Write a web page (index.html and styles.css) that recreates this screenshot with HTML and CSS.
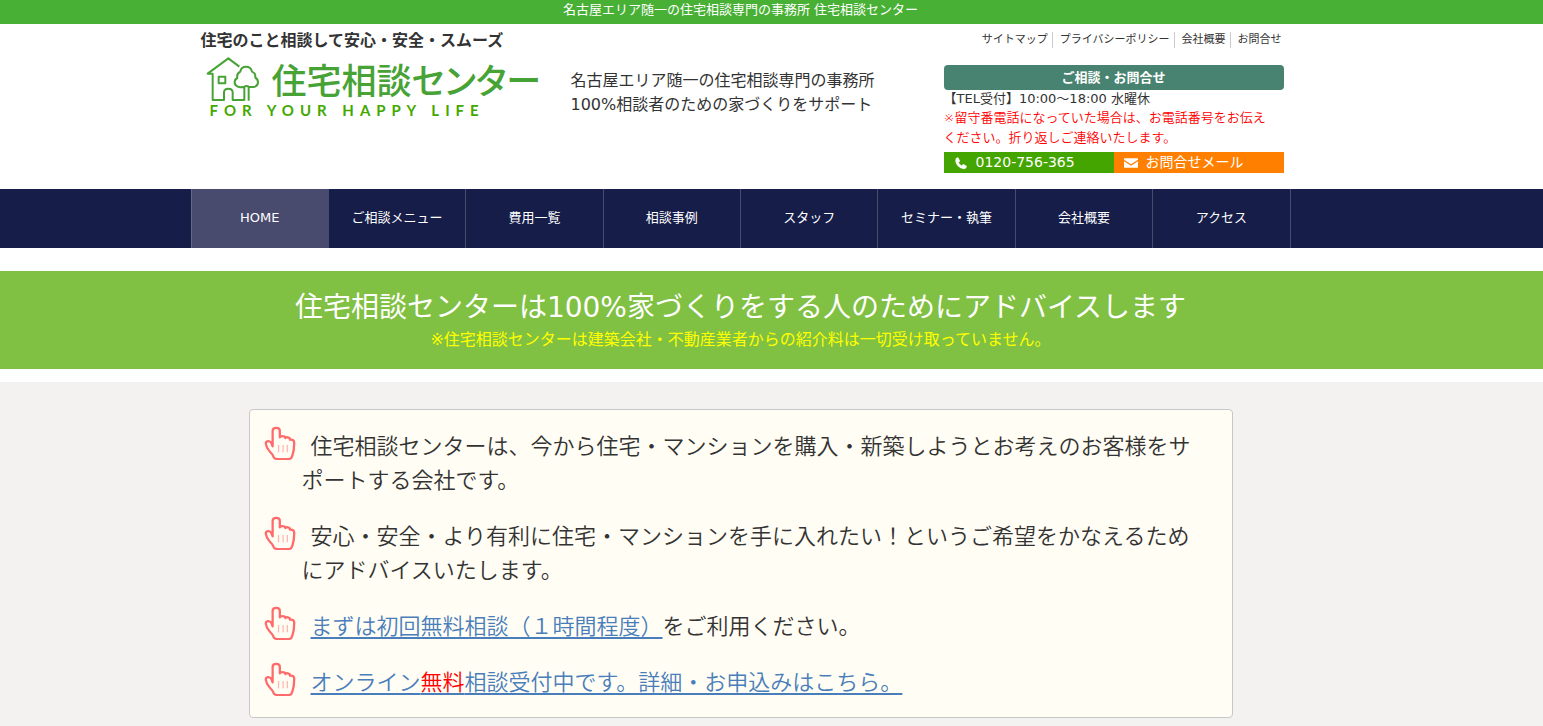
FILE: index.html
```html
<!DOCTYPE html>
<html lang="ja">
<head>
<meta charset="utf-8">
<title>住宅相談センター</title>
<link rel="stylesheet" href="styles.css">
</head>
<body>
<svg class="defs" aria-hidden="true">
  <symbol id="hand" viewBox="71 78 97 104">
    <path class="hand-line" d="M97 138V93q0-9 11-9t11 9v20q2-5 9-4 7 0 8 6 2-4 8-2 6 1 6 7 13-2 13 10 0 22-5 36l-3 8q-2 5-10 5h-33q-7 0-11-4-4-11-13-19-10-10-12-24 0-8 8-8 6 0 9 6l4 10"/>
    <path class="hand-fold" d="M115 136v22M129 136v22M142 136v22"/>
  </symbol>
</svg>
<p class="topbar">名古屋エリア随一の住宅相談専門の事務所 住宅相談センター</p>
<header class="wrap">
  <div class="header">
    <div class="brand">
      <h1 class="tagline">住宅のこと相談して安心・安全・スムーズ</h1>
      <a class="logo" href="#">
        <span class="logo-row">
          <svg class="house" viewBox="18 18 162 138" aria-hidden="true">
            <path d="M118 50L85 25 23 71h15v79h34v-23q0-11 13-11t13 11v23h35M56 80h20v20H56zM133 152v-42q-13 3-20 0-9-4-9-13 0-9 8-13-3-13 9-19 2-15 17-15t18 15q11 4 10 18 8 5 8 14 0 10-9 13-9 2-19 0v42M133 110q7-4 13 0"/>
          </svg>
          <span class="logo-name">住宅相談センター</span>
        </span>
        <span class="logo-sub">FOR YOUR HAPPY LIFE</span>
      </a>
    </div>
    <p class="lead">名古屋エリア随一の住宅相談専門の事務所<br>100%相談者のための家づくりをサポート</p>
    <div class="contact">
      <ul class="links">
        <li><a href="#">サイトマップ</a></li>
        <li><a href="#">プライバシーポリシー</a></li>
        <li><a href="#">会社概要</a></li>
        <li><a href="#">お問合せ</a></li>
      </ul>
      <h2 class="contact-title">ご相談・お問合せ</h2>
      <p class="hours">【TEL受付】10:00～18:00 水曜休</p>
      <p class="notice">※留守番電話になっていた場合は、お電話番号をお伝えください。折り返しご連絡いたします。</p>
      <div class="actions">
        <a class="tel" href="#"><svg class="icon" viewBox="0 0 16 16" aria-hidden="true"><path d="M4.600 1.500L7 5.600 5.300 7.400Q6.500 9.800 8.800 10.900L10.600 9.100 14.600 11.500Q14.500 15 11.300 15 7.500 15 4.200 11.500 1.300 8.300 1.500 4.800 1.600 1.800 4.600 1.500z"/></svg>0120-756-365</a>
        <a class="mail" href="#"><svg class="icon" viewBox="0 0 16 16" aria-hidden="true"><path d="M1 2.500h14q1 0 1 1v.8L8 9.500 0 4.300v-.8q0-1 1-1zM0 6l8 5.200L16 6v6.500q0 1-1 1H1q-1 0-1-1z"/></svg>お問合せメール</a>
      </div>
    </div>
  </div>
</header>
<nav class="nav wrap">
  <ul class="menu">
    <li><a class="current" href="#">HOME</a></li>
    <li><a href="#">ご相談メニュー</a></li>
    <li><a href="#">費用一覧</a></li>
    <li><a href="#">相談事例</a></li>
    <li><a href="#">スタッフ</a></li>
    <li><a href="#">セミナー・執筆</a></li>
    <li><a href="#">会社概要</a></li>
    <li><a href="#">アクセス</a></li>
  </ul>
</nav>
<section class="band">
  <h2>住宅相談センターは100%家づくりをする人のためにアドバイスします</h2>
  <p>※住宅相談センターは建築会社・不動産業者からの紹介料は一切受け取っていません。</p>
</section>
<main class="main wrap">
  <ul class="points">
    <li><svg class="hand" aria-hidden="true"><use href="#hand"/></svg><p>住宅相談センターは、今から住宅・マンションを購入・新築しようとお考えのお客様をサポートする会社です。</p></li>
    <li><svg class="hand" aria-hidden="true"><use href="#hand"/></svg><p>安心・安全・より有利に住宅・マンションを手に入れたい！というご希望をかなえるためにアドバイスいたします。</p></li>
    <li><svg class="hand" aria-hidden="true"><use href="#hand"/></svg><p><a href="#">まずは初回無料相談（１時間程度）</a>をご利用ください。</p></li>
    <li><svg class="hand" aria-hidden="true"><use href="#hand"/></svg><p><a href="#">オンライン<em>無料</em>相談受付中です。詳細・お申込みはこちら。</a></p></li>
  </ul>
</main>
</body>
</html>
```

FILE: styles.css
```css
* { box-sizing: border-box; margin: 0; padding: 0; }
body {
  font-family: "DejaVu Sans", "Noto Sans CJK JP", sans-serif;
  font-size: 13px;
  line-height: 20px;
  color: #333;
  background: #fff;
}
ul { list-style: none; }
a { color: inherit; text-decoration: none; }
.defs { position: absolute; width: 0; height: 0; }

.topbar, .wrap, .band { padding-right: 62px; }
.topbar {
  height: 24px;
  background: #48b035;
  color: #fff;
  text-align: center;
}

.header {
  display: grid;
  grid-template-columns: 370px 1fr 340px;
  max-width: 1100px;
  margin: 0 auto;
  padding: 4px 7px 16px 10px;
}
.tagline { padding-top: 1px; font-size: 16px; line-height: 24px; }
.logo { display: block; padding: 2px 0 0 5px; color: #48a336; }
.logo-row { display: flex; align-items: center; gap: 12px; height: 48px; }
.house {
  width: 54px;
  height: 46px;
  fill: none;
  stroke: #48a336;
  stroke-width: 6;
  stroke-linejoin: round;
}
.logo-name {
  font-family: "Noto Sans CJK JP", sans-serif;
  font-size: 35px;
  font-weight: 500;
  line-height: 48px;
  font-feature-settings: "palt";
  white-space: nowrap;
}
.logo-sub {
  display: block;
  padding-left: 4px;
  font-family: Lato, sans-serif;
  font-size: 15px;
  font-weight: 700;
  line-height: 14px;
  letter-spacing: 6px;
  color: #43a800;
}
.lead { padding-top: 41px; font-size: 16px; line-height: 24px; }

.links { display: flex; justify-content: flex-end; padding: 4px 2px 0 0; font-size: 11px; line-height: 16px; }
.links li + li { margin-left: 4px; padding-left: 7px; border-left: 1px solid #ccc; }
.contact-title {
  margin-top: 17px;
  border-radius: 4px;
  background: #488270;
  color: #fff;
  font-size: 13px;
  line-height: 25px;
  text-align: center;
}
.hours { line-height: 18px; }
.notice { padding-right: 10px; color: #f00; font-weight: 350; }
.actions { display: grid; grid-template-columns: 1fr 1fr; margin-top: 4px; color: #fff; font-size: 14px; line-height: 21px; }
.actions a { display: flex; align-items: center; gap: 8px; padding-left: 10px; }
.tel { background: #45a500; }
.mail { background: #ff8000; }
.icon { width: 14px; height: 14px; fill: #fff; }

.nav { background: #161d49; }
.menu {
  display: grid;
  grid-template-columns: repeat(8, 1fr);
  max-width: 1100px;
  margin: 0 auto;
  border-right: 1px solid #484a6e;
}
.menu a {
  display: block;
  height: 59px;
  border-left: 1px solid #484a6e;
  color: #fff;
  line-height: 57px;
  text-align: center;
}
.menu .current { background: #484a6e; border-color: #666887; }

.band { margin: 23px 0 13px; padding-top: 17px; padding-bottom: 17px; background: #80c043; color: #fff; text-align: center; }
.band h2 { font-size: 28px; font-weight: 400; line-height: 40px; }
.band p { color: #ff0; font-size: 16px; line-height: 24px; }

.main { padding-top: 27px; padding-bottom: 27px; background: #f3f2f1; }
.points {
  display: grid;
  gap: 22px;
  max-width: 984px;
  margin: 0 auto;
  padding: 20px 28px 17px 14px;
  border: 1px solid #c8c8c8;
  border-radius: 4px;
  background: #fffdf4;
  font-size: 22px;
  font-weight: 350;
  line-height: 34px;
}
.points li { display: grid; grid-template-columns: 32px 1fr; gap: 6px; align-items: start; }
.points p { text-indent: 9px; }
.points a { color: #4a7ebb; text-decoration: underline; text-decoration-thickness: 2px; text-underline-offset: 3px; }
.points em { color: #f00; font-style: normal; }
.hand { width: 32px; height: 34px; margin-top: -4px; }
.hand-line { fill: none; stroke: #ff6b6b; stroke-width: 7; stroke-linejoin: round; stroke-linecap: round; }
.hand-fold { fill: none; stroke: #ffb8b4; stroke-width: 4; }
```
